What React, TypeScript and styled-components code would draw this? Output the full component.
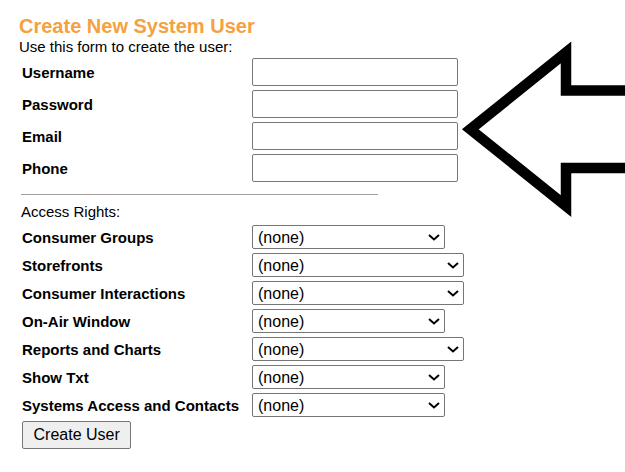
import React from "react";
import styled, { createGlobalStyle } from "styled-components";

const Global = createGlobalStyle`
  html, body { margin: 0; padding: 0; background: #ffffff; }
  body { font-family: "Liberation Sans", Arial, sans-serif; color: #000; }
`;

const Page = styled.div`
  position: relative;
  width: 625px;
  height: 472px;
  overflow: hidden;
  padding-left: 19px;
  box-sizing: border-box;
`;

const Title = styled.h2`
  margin: 15px 0 0 0;
  font-size: 20px;
  line-height: 23px;
  font-weight: bold;
  color: #f5a142;
`;

const Intro = styled.div`
  font-size: 15px;
  line-height: 17px;
`;

const FieldGrid = styled.div<{ $top: number }>`
  display: grid;
  grid-template-columns: 230px auto;
  row-gap: 4px;
  margin: ${(p) => p.$top}px 0 0 3px;
  justify-items: start;
`;

const Label = styled.label`
  align-self: center;
  font-size: 15px;
  font-weight: bold;
  line-height: 17px;
`;

const TextInput = styled.input`
  width: 206px;
  height: 28px;
  box-sizing: border-box;
  border: 1px solid #767676;
  border-radius: 2px;
  background: #fff;
  font-family: "Liberation Sans", Arial, sans-serif;
  font-size: 14px;
  padding: 1px 4px;
  margin: 0;
`;

const SelectWrap = styled.div<{ $wide?: boolean }>`
  position: relative;
  width: ${(p) => (p.$wide ? 212 : 193)}px;
  height: 24px;
`;

const Select = styled.select`
  appearance: none;
  -webkit-appearance: none;
  width: 100%;
  height: 100%;
  box-sizing: border-box;
  border: 1px solid #767676;
  border-radius: 2px;
  background: #fff;
  padding: 0 24px 0 5px;
  font-family: "Liberation Sans", Arial, sans-serif;
  font-size: 16px;
  color: #000;
  margin: 0;
`;

const Chevron = styled.svg`
  position: absolute;
  right: 5px;
  top: 9px;
  width: 12px;
  height: 7px;
  pointer-events: none;
`;

const Rule = styled.div`
  width: 357px;
  height: 1px;
  background: #a0a0a0;
  margin: 12px 0 0 2px;
`;

const Section = styled.div`
  font-size: 15px;
  line-height: 17px;
  margin: 8px 0 0 2px;
`;

const Button = styled.button`
  margin: 4px 0 0 3px;
  height: 28px;
  padding: 0 10.5px;
  font-family: "Liberation Sans", Arial, sans-serif;
  font-size: 16px;
  color: #000;
  background: #efefef;
  border: 1px solid #767676;
  border-radius: 2px;
`;

const Arrow = styled.svg`
  position: absolute;
  left: 455px;
  top: 35px;
  width: 170px;
  height: 185px;
  overflow: hidden;
`;

const fields = ["Username", "Password", "Email", "Phone"];
const rights: [string, boolean][] = [
  ["Consumer Groups", false],
  ["Storefronts", true],
  ["Consumer Interactions", true],
  ["On-Air Window", false],
  ["Reports and Charts", true],
  ["Show Txt", false],
  ["Systems Access and Contacts", false],
];

export default function App() {
  return (
    <Page>
      <Global />
      <Title>Create New System User</Title>
      <Intro>Use this form to create the user:</Intro>
      <FieldGrid $top={3}>
        {fields.map((f) => (
          <React.Fragment key={f}>
            <Label>{f}</Label>
            <TextInput type={f === "Password" ? "password" : "text"} />
          </React.Fragment>
        ))}
      </FieldGrid>
      <Rule />
      <Section>Access Rights:</Section>
      <FieldGrid $top={5}>
        {rights.map(([name, wide]) => (
          <React.Fragment key={name}>
            <Label>{name}</Label>
            <SelectWrap $wide={wide}>
              <Select defaultValue="none">
                <option value="none">(none)</option>
              </Select>
              <Chevron viewBox="0 0 12 7">
                <polyline
                  points="1,1 6,5.5 11,1"
                  fill="none"
                  stroke="#000"
                  strokeWidth={2}
                />
              </Chevron>
            </SelectWrap>
          </React.Fragment>
        ))}
      </FieldGrid>
      <Button type="button">Create User</Button>
      <Arrow viewBox="455 35 170 185">
        <polygon
          points="640,90.5 566,90.5 566,52.5 470.3,129.3 566,206 566,168 640,168"
          fill="#ffffff"
          stroke="#000000"
          strokeWidth={10.5}
          strokeLinejoin="miter"
          strokeMiterlimit={10}
        />
      </Arrow>
    </Page>
  );
}
